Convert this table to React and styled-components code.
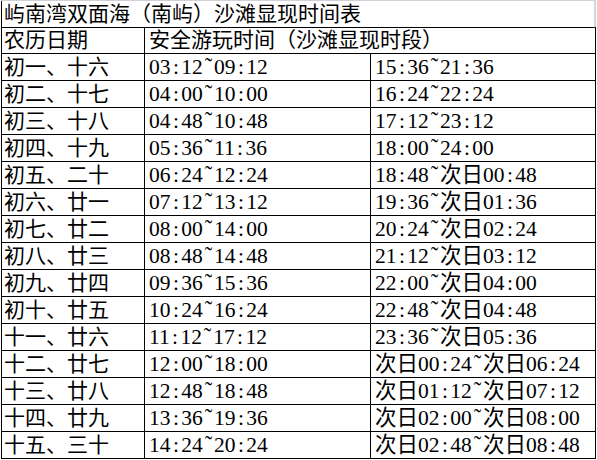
import React from "react";
import styled, { createGlobalStyle } from "styled-components";

const Global = createGlobalStyle`
  html, body { margin: 0; padding: 0; background: #fff; }
  body { font-family: "Liberation Serif", "Noto Sans CJK SC", serif; color: #000; }
`;

const Sheet = styled.div`
  display: grid;
  grid-template-columns: 143px 226px 225px;
  grid-auto-rows: 27px;
  margin-left: 1px;
  border-left: 1px solid #000;
  box-sizing: border-box;
  width: 595px;
`;

const Cell = styled.div`
  box-sizing: border-box;
  display: flex;
  align-items: center;
  padding-left: ${(p) => (p.$first ? "2px" : "4px")};
  border-right: 1px solid #000;
  border-bottom: 1px solid #000;
  font-size: ${(p) => (p.$time ? "21.5px" : "21px")};
  line-height: 26px;
  white-space: nowrap;
  overflow: hidden;
  grid-column: ${(p) => p.$span || "auto"};
`;

const TitleCell = styled.div`
  grid-column: 1 / -1;
  box-sizing: border-box;
  height: 28px;
  margin-left: -1px;
  display: flex;
  align-items: center;
  padding-left: 3px;
  border-top: 1px solid #cfd0d8;
  border-right: 2px solid #d4d5dc;
  border-bottom: 1px solid #000;
  font-size: 21px;
  line-height: 26px;
  white-space: nowrap;
`;

const Sep = styled.span`
  display: inline-block;
  width: 0.5em;
  text-align: center;
`;

const Tilde = styled(Sep)`
  font-size: 1.05em;
`;

const rows = [
  ["初一、十六", "03:12~09:12", "15:36~21:36"],
  ["初二、十七", "04:00~10:00", "16:24~22:24"],
  ["初三、十八", "04:48~10:48", "17:12~23:12"],
  ["初四、十九", "05:36~11:36", "18:00~24:00"],
  ["初五、二十", "06:24~12:24", "18:48~次日00:48"],
  ["初六、廿一", "07:12~13:12", "19:36~次日01:36"],
  ["初七、廿二", "08:00~14:00", "20:24~次日02:24"],
  ["初八、廿三", "08:48~14:48", "21:12~次日03:12"],
  ["初九、廿四", "09:36~15:36", "22:00~次日04:00"],
  ["初十、廿五", "10:24~16:24", "22:48~次日04:48"],
  ["十一、廿六", "11:12~17:12", "23:36~次日05:36"],
  ["十二、廿七", "12:00~18:00", "次日00:24~次日06:24"],
  ["十三、廿八", "12:48~18:48", "次日01:12~次日07:12"],
  ["十四、廿九", "13:36~19:36", "次日02:00~次日08:00"],
  ["十五、三十", "14:24~20:24", "次日02:48~次日08:48"],
];

function Time({ text }) {
  const parts = [];
  let buf = "";
  [...text].forEach((ch, i) => {
    if (ch === ":" || ch === "~") {
      if (buf) parts.push(buf);
      buf = "";
      parts.push(
        ch === ":" ? <Sep key={i}>:</Sep> : <Tilde key={i}>˜</Tilde>
      );
    } else buf += ch;
  });
  if (buf) parts.push(buf);
  return <>{parts}</>;
}

export default function App() {
  return (
    <>
      <Global />
      <Sheet>
        <TitleCell>屿南湾双面海（南屿）沙滩显现时间表</TitleCell>
        <Cell $first>农历日期</Cell>
        <Cell $span="2 / 4">安全游玩时间（沙滩显现时段）</Cell>
        {rows.map((r) => (
          <React.Fragment key={r[0]}>
            <Cell $first>{r[0]}</Cell>
            <Cell $time><Time text={r[1]} /></Cell>
            <Cell $time><Time text={r[2]} /></Cell>
          </React.Fragment>
        ))}
      </Sheet>
    </>
  );
}
